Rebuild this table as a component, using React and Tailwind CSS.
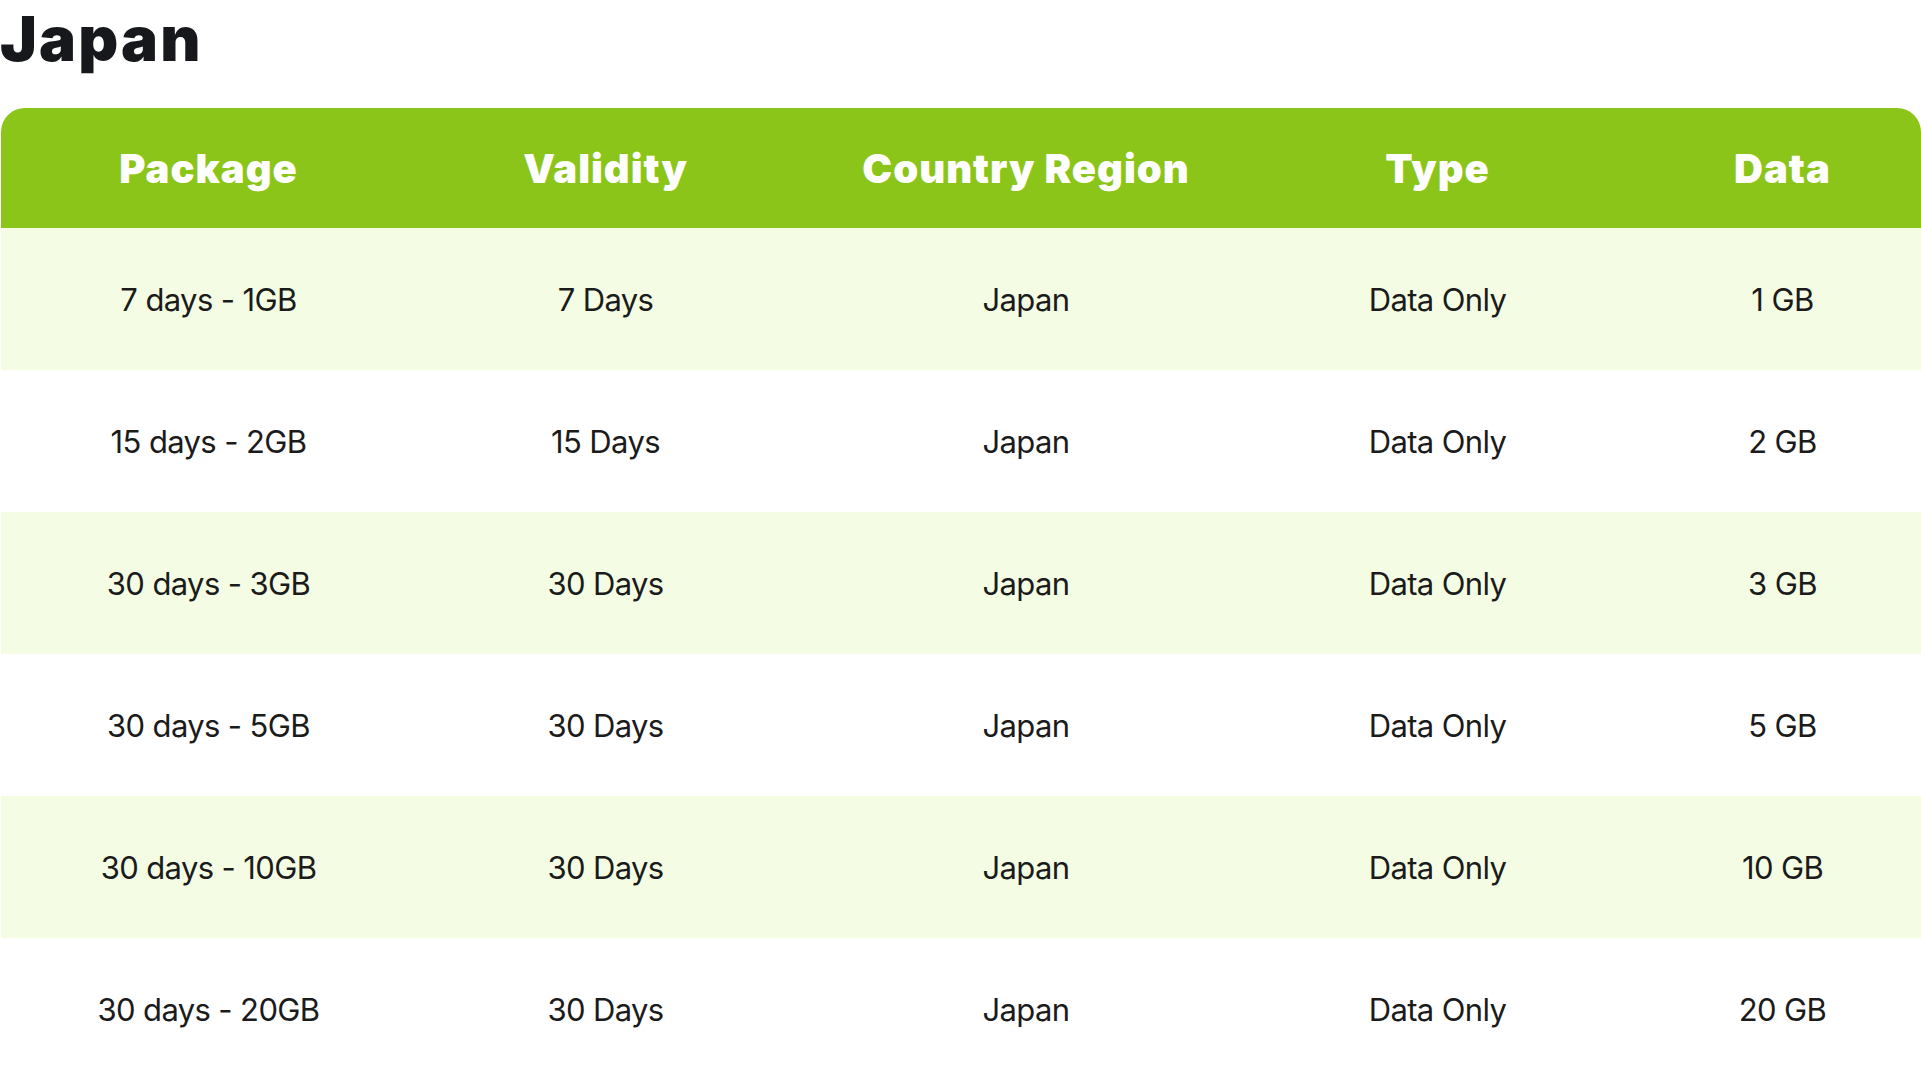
import React from 'react';

const plans = [
  { pkg: '7 days - 1GB', validity: '7 Days', data: '1 GB' },
  { pkg: '15 days - 2GB', validity: '15 Days', data: '2 GB' },
  { pkg: '30 days - 3GB', validity: '30 Days', data: '3 GB' },
  { pkg: '30 days - 5GB', validity: '30 Days', data: '5 GB' },
  { pkg: '30 days - 10GB', validity: '30 Days', data: '10 GB' },
  { pkg: '30 days - 20GB', validity: '30 Days', data: '20 GB' },
];

const cols = 'grid grid-cols-[415px_379px_462px_361px_1fr]';

const App = () => {
  return (
    <div className="w-[1921px] h-[1080px] overflow-hidden bg-white" style={{ fontFamily: 'Inter, "Noto Sans", sans-serif' }}>
      <h1 className="pt-2 text-[62px] leading-none font-black tracking-[0.035em] text-[#17181c]">Japan</h1>

      <div className="mt-[38px] ml-px">
        <div className={`${cols} h-[120px] pt-[2px] items-center rounded-t-[24px] bg-[#8cc51a] text-white text-[40px] font-black tracking-[0.025em]`}>
          <div className="text-center">Package</div>
          <div className="text-center">Validity</div>
          <div className="text-center">Country Region</div>
          <div className="text-center">Type</div>
          <div className="text-center pl-[26px]">Data</div>
        </div>

        {plans.map((p, i) => (
          <div
            key={p.pkg}
            className={`${cols} h-[142px] pt-[3px] items-center text-[31px] tracking-[-0.02em] text-[#1b1b1b] ${i % 2 === 0 ? 'bg-[#f4fde4]' : 'bg-white'}`}
          >
            <div className="text-center">{p.pkg}</div>
            <div className="text-center">{p.validity}</div>
            <div className="text-center">Japan</div>
            <div className="text-center">Data Only</div>
            <div className="text-center pl-[26px]">{p.data}</div>
          </div>
        ))}
      </div>
    </div>
  );
};

export default App;
